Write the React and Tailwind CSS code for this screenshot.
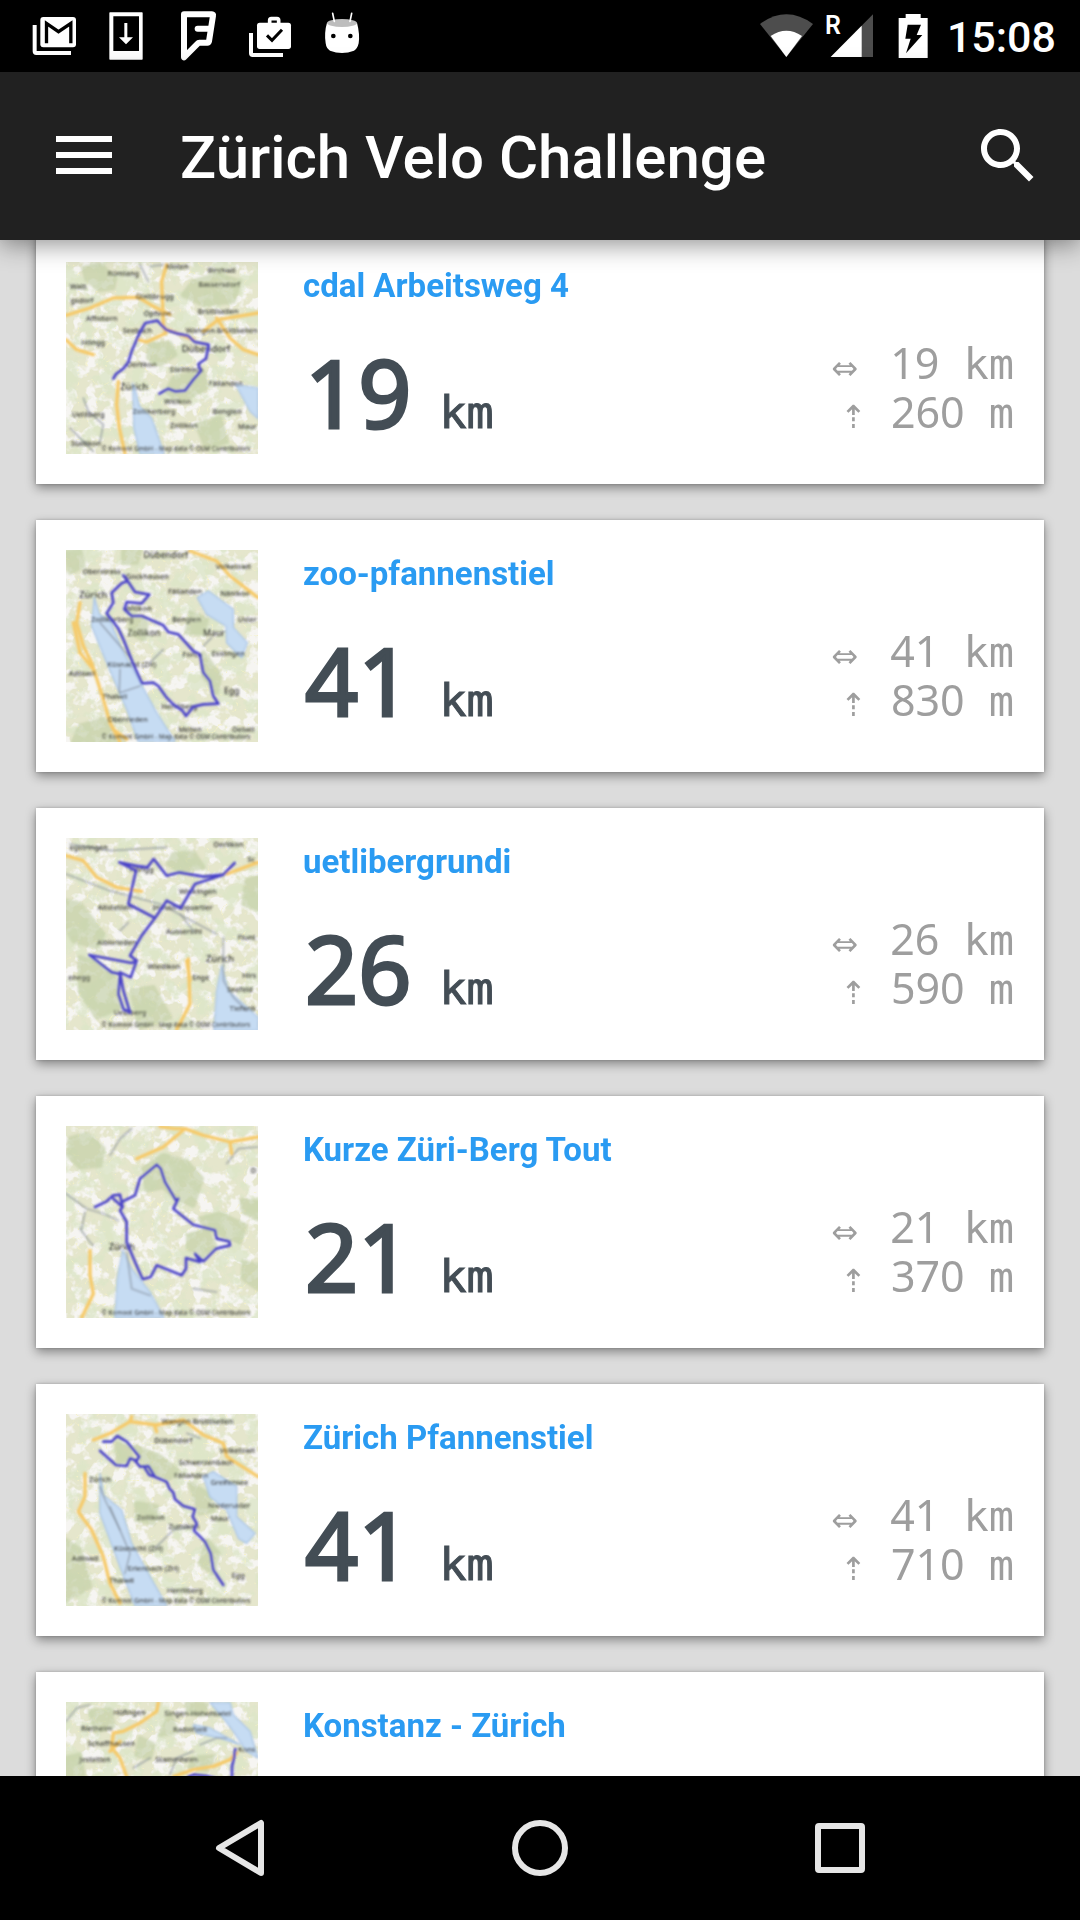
const LAKE = "#c6dcf3";

const routes = [
  {
    name: "cdal Arbeitsweg 4",
    km: 19,
    climb: 260,
    map: {
      seed: 3,
      woods: ["70,40 120,30 165,70 160,100 120,105 80,75", "400,80 470,60 540,80 520,140 430,150 370,120", "270,270 330,265 345,300 300,330 265,310", "340,370 430,350 440,400 360,440 320,410", "410,510 480,490 500,560 440,580"],
      lakes: ["218,385 230,420 238,455 275,490 312,597 240,597 222,520", "528,390 594,400 594,492 570,470"],
      roads: ["18,182 90,160 160,130 235,128 280,155 330,180", "320,30 305,80 308,150 310,210 318,235 260,262 235,255", "310,220 350,235 400,255", "18,255 50,285 100,300", "430,230 475,195 594,175", "470,190 510,250 550,285 594,300", "175,380 170,450 178,520 195,597"],
      tracks: ["240,30 265,80", "70,430 85,470 130,510 120,560", "30,520 70,560 100,590", "270,35 310,30"],
      labels: [[352, 36, "Kloten"], [190, 57, "Rümlang"], [485, 47, "Birchwil"], [477, 91, "Bassersdorf"], [55, 95, "Watt"], [66, 138, "gsdorf"], [284, 127, "Glattbrugg"], [293, 176, "Opfikon"], [474, 170, "Brüttisellen"], [125, 192, "Affoltern"], [485, 228, "Wangen-Brüttisellen"], [232, 228, "Seebach"], [100, 264, "Höngg"], [438, 284, "Dübendorf", 28], [245, 330, "Oerlikon"], [380, 345, "Stettbach"], [222, 400, "Zürich", 28], [497, 388, "Fällanden"], [353, 440, "Witikon"], [282, 472, "Zollikerberg"], [502, 472, "Benglen"], [85, 480, "Uetliberg"], [372, 514, "Zollikon"], [562, 516, "Maur"], [78, 566, "Stallikon"]],
      route: "160,372 168,358 190,342 205,322 215,290 240,232 256,205 292,198 318,225 350,236 384,244 405,262 446,270 438,312 415,328 422,350 400,375 375,408 345,410 325,402 298,417",
    },
  },
  {
    name: "zoo-pfannenstiel",
    km: 41,
    climb: 830,
    map: {
      seed: 8,
      woods: ["18,30 60,25 70,70 30,90", "215,215 260,240 250,290 210,270", "390,210 440,230 430,270 380,270", "430,330 480,400 470,450 430,400", "60,550 130,530 190,597 40,597", "190,25 240,25 230,60 190,60"],
      lakes: ["103,165 118,215 150,235 190,330 230,400 290,510 345,597 235,597 200,500 140,360 95,250", "412,165 445,145 520,200 520,255 562,300 545,345 500,300 498,250 440,215"],
      roads: ["60,180 50,240 70,310 95,360 130,470 150,540 180,597", "40,240 60,330 100,380", "390,25 470,55 510,100 594,165", "160,560 200,590"],
      tracks: ["270,360 310,320", "180,380 178,450", "120,240 215,350", "180,450 240,430", "430,310 455,285"],
      labels: [[318, 40, "Dübendorf", 26], [520, 73, "Volketswil"], [125, 88, "Oberstrass"], [262, 102, "Gockhausen"], [375, 147, "Fällanden"], [525, 153, "Nänikon"], [100, 158, "Zürich", 28], [235, 197, "Witikon"], [157, 230, "Zollikerberg"], [380, 231, "Benglen"], [562, 232, "Uster"], [252, 273, "Zollikon", 26], [462, 273, "Maur", 26], [505, 333, "Esslingen"], [397, 335, "Forch"], [215, 367, "Küsnacht (ZH)"], [66, 392, "Adliswil"], [515, 446, "Egg", 26], [165, 462, "Thalwil"], [358, 491, "Herrliberg"], [203, 530, "Oberrieden"], [390, 562, "Meilen"], [550, 560, "Oetwil"]],
      route: "190,98 203,115 225,148 268,156 245,182 200,178 193,200 215,220 245,220 310,248 325,268 355,275 400,325 420,335 430,390 450,415 460,460 475,483 430,485 400,492 378,520 368,505 340,485 320,465 295,430 280,420 246,422 220,365 190,290 175,258 140,212 160,180 155,150 185,122 203,115 190,98",
    },
  },
  {
    name: "uetlibergrundi",
    km: 26,
    climb: 590,
    map: {
      seed: 14,
      woods: ["18,210 60,220 130,310 110,350 40,330 18,290", "340,70 400,65 430,110 360,120 325,100", "560,150 594,140 594,235 550,220", "60,380 120,400 170,450 180,530 110,560 60,480", "215,480 280,470 330,560 240,590"],
      lakes: ["485,405 505,480 594,560 594,600 462,600 470,480"],
      roads: ["18,75 70,90 110,140 170,170 245,182", "385,385 390,520 350,597", "500,130 594,95", "380,390 390,450"],
      tracks: ["18,130 150,180 300,220 470,310", "30,40 150,60 320,50", "180,300 205,275", "490,320 490,450 520,500 560,540", "360,250 400,300"],
      labels: [[86, 50, "egstringen"], [505, 43, "Oerlikon"], [574, 88, "Sc"], [245, 117, "Höngg"], [413, 182, "Wipkingen"], [165, 231, "Altstetten"], [368, 230, "Industriequartier"], [372, 303, "Aussersihl"], [170, 337, "Albisrieden"], [560, 320, "Flunt"], [480, 386, "Zürich", 28], [312, 407, "Wiedikon"], [422, 441, "Enge"], [58, 441, "enegg"], [568, 436, "Hirs"], [540, 478, "Seefeld"], [548, 533, "Tiefenb"], [210, 547, "Uetliberg"]],
      route: "178,95 225,105 262,110 281,85 320,135 358,125 430,138 490,132 524,97 490,132 405,160 362,232 320,210 300,240 285,262 205,220 228,120 178,95 228,120 M285,262 245,315 210,375 230,390 212,440 180,425 M88,373 215,397 230,390 M88,373 155,425 180,430 175,490 190,535 210,545 190,480 180,425",
    },
  },
  {
    name: "Kurze Züri-Berg Tout",
    km: 21,
    climb: 370,
    map: {
      seed: 21,
      woods: ["30,60 80,45 130,90 120,140 60,145 25,110", "250,150 310,110 380,130 425,180 400,260 350,240 310,205 260,215", "420,300 480,285 555,320 540,370 480,345 440,330", "385,350 440,335 465,380 430,410 385,390", "545,245 594,250 594,300 550,280", "550,430 594,440 594,510 550,480"],
      lakes: ["188,395 215,450 270,520 312,597 165,597 172,480"],
      roads: ["230,120 310,85 375,30 430,50 510,70 594,55", "375,30 345,30 300,24", "510,70 515,105", "90,395 90,470 100,525 65,597"],
      tracks: ["18,225 80,270 130,285 175,305", "150,110 180,60 215,30", "60,330 90,370 100,380", "75,280 65,330", "500,135 535,90 594,85", "200,400 215,510 270,530", "400,510 470,520"],
      labels: [[186, 388, "Zürich", 26], [580, 155, "D"]],
      route: "105,265 140,248 160,230 180,228 188,265 160,240 M188,265 180,275 200,310 200,370 225,430 248,482 272,475 290,440 365,470 378,450 378,418 420,430 405,405 430,428 468,390 510,380 508,368 470,360 465,335 400,318 340,270 355,240 348,245 315,190 302,150 290,138 240,180 225,230 185,250",
    },
  },
  {
    name: "Zürich Pfannenstiel",
    km: 41,
    climb: 710,
    map: {
      seed: 31,
      woods: ["170,110 205,120 215,155 175,165", "225,120 300,150 350,190 330,215 260,190", "390,230 440,260 460,310 420,320", "440,400 475,440 460,500 420,470", "18,400 60,430 90,540 18,580", "230,290 290,300 280,350 230,340"],
      lakes: ["120,200 130,265 185,310 215,410 270,510 320,597 225,597 180,480 120,320", "430,210 460,195 530,240 530,330 585,380 560,410 535,395 500,310 450,270"],
      roads: ["215,30 210,45 150,80 100,100", "210,45 290,55 370,40 430,85 490,110 500,150 594,210", "75,200 75,270 55,315 95,370 130,450 150,530 180,590", "285,60 290,75"],
      tracks: ["290,420 340,370 400,360", "120,240 135,280 180,370", "150,300 210,440 195,500", "380,80 420,95"],
      labels: [[412, 46, "Wangen-Brüttisellen"], [340, 101, "Dübendorf"], [532, 132, "Volketswil"], [438, 167, "Schwerzenbach"], [393, 207, "Fällanden"], [508, 228, "Greifensee"], [120, 219, "Zürich"], [507, 298, "Niederuster"], [272, 332, "Zollikon"], [480, 337, "Maur"], [372, 359, "Zumikon"], [235, 427, "Küsnacht (ZH)"], [75, 455, "Adliswil"], [280, 485, "Erlenbach (ZH)"], [185, 522, "Thalwil"], [535, 507, "Egg"], [375, 551, "Herrliberg"]],
      route: "130,105 155,105 172,88 200,105 238,150 230,162 210,155 200,178 168,175 120,132 M225,162 240,180 265,178 285,210 268,205 255,185 M285,210 320,225 328,245 340,258 345,278 370,298 405,308 398,330 410,350 402,372 435,405 452,440 460,490 490,535",
    },
  },
  {
    name: "Konstanz - Zürich",
    km: 72,
    climb: 620,
    map: {
      seed: 44,
      woods: ["90,50 150,45 160,95 110,110", "380,25 440,30 430,60 385,55", "330,60 350,110 300,120", "18,190 60,180 70,246 18,246", "400,190 460,185 440,225 390,220", "240,130 280,150 270,190 230,180"],
      lakes: ["450,24 510,24 520,60 570,110 594,190 560,170 520,110 490,70", "400,90 450,100 540,150 480,130 410,115"],
      roads: ["295,24 290,50 240,85 190,110 160,115 155,160 180,190 200,246", "340,246 400,225 460,215 510,195 530,175", "180,140 150,170"],
      tracks: ["18,80 50,40 90,30", "400,170 350,190 330,240", "420,150 470,130 500,130", "270,190 220,220"],
      labels: [[208, 53, "Hüfingen"], [413, 56, "Singen-Hohentwiel"], [110, 101, "Rietheim"], [390, 105, "Radolfzell"], [154, 146, "Schaffhausen"], [105, 195, "Jestetten"], [350, 195, "Stammheim"], [560, 166, "Kons"]],
      route: "526,163 522,190 516,215 516,260 M470,252 440,244 400,240 385,246",
    },
  },
];

function RouteMap({ id, name, map }) {
  const field = "field" + id;
  const wood = "wood" + id;
  const lane = "lane" + id;
  const soft = "soft" + id;
  return (
    <svg className="size-48 shrink-0" viewBox="18 22 576 576" role="img" aria-label={"Map of " + name}>
      <defs>
        <filter id={wood} x="0" y="0" width="100%" height="100%">
          <feTurbulence type="fractalNoise" baseFrequency="0.018" numOctaves="4" seed={map.seed} />
          <feColorMatrix values="0 0 0 0 0.72  0 0 0 0 0.79  0 0 0 0 0.58  6 0 0 0 -2.9" />
        </filter>
        <filter id={lane} x="0" y="0" width="100%" height="100%">
          <feTurbulence type="turbulence" baseFrequency="0.018" numOctaves="3" seed={map.seed + 50} />
          <feColorMatrix values="0 0 0 0 0.92  0 0 0 0 0.89  0 0 0 0 0.56  0 -14 0 0 1.2" />
        </filter>
        <filter id={field} x="0" y="0" width="100%" height="100%">
          <feTurbulence type="fractalNoise" baseFrequency="0.025" numOctaves="3" seed={map.seed + 90} />
          <feColorMatrix values="0 0 0 0 0.94  0 0 0 0 0.93  0 0 0 0 0.93  0 0 7 0 -3.2" />
        </filter>
        <filter id={soft}>
          <feGaussianBlur stdDeviation="3" />
        </filter>
      </defs>
      <rect x="18" y="22" width="576" height="576" fill="#e5e6cc" />
      <rect x="18" y="22" width="576" height="576" filter={`url(#${field})`} opacity="0.9" />
      <rect x="18" y="22" width="576" height="576" filter={`url(#${wood})`} opacity="0.8" />
      <rect x="18" y="22" width="576" height="576" filter={`url(#${lane})`} opacity="0.8" />
      <g filter={`url(#${soft})`} fill="none" strokeLinejoin="round" strokeLinecap="round">
        {map.woods.map((p) => (
          <polygon key={p} points={p} fill="#c0cda2" stroke="#c0cda2" strokeWidth="14" opacity="0.6" />
        ))}
        {map.lakes.map((p) => (
          <polygon key={p} points={p} fill={LAKE} stroke="#aac5e8" strokeWidth="4" />
        ))}
        {map.tracks.map((p) => (
          <polyline key={p} points={p} stroke="#7d8592" strokeWidth="5" opacity="0.6" />
        ))}
        {map.roads.map((p) => (
          <polyline key={p} points={p} stroke="#f6c968" strokeWidth="10" />
        ))}
        <g fill="#2f2f2d" fontFamily="'Noto Sans', sans-serif" fontWeight="500" textAnchor="middle">
          {map.labels.map(([x, y, text, size]) => (
            <text key={text} x={x} y={y + 7} fontSize={size || 22}>
              {text}
            </text>
          ))}
          <text x="348" y="590" fontSize="19">
            © Komoot GmbH - Map data © OSM Contributors
          </text>
        </g>
        <path d={"M" + map.route} stroke="#4a42c8" strokeWidth="8" />
      </g>
    </svg>
  );
}

function StatusIcons() {
  return (
    <div className="flex">
      <svg className="size-[72px]" viewBox="54 0 216 216" aria-label="Gmail">
        <path d="M104 75v79q0 5 5 5h104" fill="none" stroke="#fff" strokeWidth="12" />
        <rect x="121" y="51" width="107" height="91" rx="9" fill="#fff" />
        <path d="M139.500 130V70l36 25 37-25v60" fill="none" stroke="#000" strokeWidth="10" />
      </svg>
      <svg className="size-[72px]" viewBox="270 0 216 216" aria-label="System update">
        <path fillRule="evenodd" d="M330 37h96q2 0 2 2v138q0 2-2 2h-96q-2 0-2-2V39q0-2 2-2zM340 49v104h77V49z" fill="#fff" />
        <path d="M373 69h9v43h17l-21 21-21-21h16z" fill="#fff" />
      </svg>
      <svg className="size-[72px]" viewBox="486 0 216 216" aria-label="Foursquare">
        <path d="M552 43h84q4 0 3 4l-12 77q-1 4-5 4h-24q-3 0-5 3l-41 41z" fill="none" stroke="#fff" strokeWidth="18" strokeLinejoin="round" />
        <path d="M593 86h35" fill="none" stroke="#fff" strokeWidth="18" strokeLinecap="round" />
      </svg>
      <svg className="size-[72px]" viewBox="702 0 216 216" aria-label="Play Store">
        <path d="M753 99v61q0 5 5 5h91" fill="none" stroke="#fff" strokeWidth="12" />
        <path d="M809 70V61q0-5 5-5h17q5 0 5 5v9" fill="none" stroke="#fff" strokeWidth="11" />
        <rect x="771" y="68" width="102" height="79" rx="8" fill="#fff" />
        <path d="M801 106l15 15 30-32" fill="none" stroke="#000" strokeWidth="9" />
      </svg>
      <svg className="size-[72px]" viewBox="918 0 216 216" aria-label="Android">
        <path d="M981 68q45 20 90 0 9 34 5 62-4 17-14 22-36 14-72 0-11-6-13-22-5-32 4-62z" fill="#fff" />
        <ellipse cx="1026" cy="69" rx="45" ry="12" fill="#bdbdbd" />
        <path d="M998 40l5 24M1055 40l-5 24" stroke="#fff" strokeWidth="5" strokeLinecap="round" />
        <circle cx="1000" cy="108" r="7" />
        <circle cx="1051" cy="108" r="7" />
      </svg>
    </div>
  );
}

function StatusBar() {
  return (
    <div className="flex h-[72px] shrink-0 items-center justify-between bg-black pr-6 pl-[18px] text-white">
      <StatusIcons />
      <div className="flex items-center">
        <svg className="h-[72px] w-14" viewBox="60 0 168 216" aria-label="Wi-Fi">
          <path d="M142 171L63 72q79-58 159 0z" fill="#4d4d4d" />
          <path d="M142 171L95 108q47-31 94 0z" fill="#fff" />
        </svg>
        <svg className="ml-2 h-[72px] w-[52px]" viewBox="252 0 156 216" aria-label="Mobile signal, roaming">
          <path d="M402 43v128H275z" fill="#4d4d4d" />
          <path d="M368 77v94h-93z" fill="#fff" />
          <text x="258" y="101" fontSize="75" fontWeight="600" fontFamily="'Roboto', sans-serif" fill="#fff">
            R
          </text>
        </svg>
        <svg className="ml-[22px] h-[72px] w-8" viewBox="472 0 96 216" aria-label="Battery charging">
          <path d="M498 42h45v12h21v120h-87V54h21z" fill="#fff" />
          <path d="M504 74h40l-13 31h17l-49 55 14-44h-16z" fill="#000" />
        </svg>
        <span className="ml-[18px] pt-0.5 font-[Roboto,sans-serif] text-[43px] leading-none font-medium">15:08</span>
      </div>
    </div>
  );
}

function AppBar() {
  return (
    <header className="relative z-10 flex h-[168px] shrink-0 items-center bg-[#212121] pr-9 pl-12 text-white shadow-[0_4px_24px_rgba(0,0,0,0.45)]">
      <button type="button" aria-label="Menu" className="size-[72px]">
        <svg viewBox="0 0 72 72" fill="#fff">
          <path d="M8 16h56v6H8zM8 32h56v6H8zM8 48h56v6H8z" />
        </svg>
      </button>
      <h1 className="ml-[60px] flex-1 pt-1 text-[60px] leading-none font-medium">Zürich Velo Challenge</h1>
      <button type="button" aria-label="Search" className="size-[72px]">
        <svg viewBox="0 0 24 24" fill="#fff">
          <path d="M15.500 14h-.79l-.28-.27C15.410 12.590 16 11.110 16 9.500 16 5.910 13.090 3 9.500 3S3 5.910 3 9.500 5.910 16 9.500 16c1.610 0 3.090-.59 4.230-1.570l.27.28v.79l5 4.990L20.490 19l-4.990-5zm-6 0C7.010 14 5 11.990 5 9.500S7.010 5 9.500 5 14 7.010 14 9.500 11.990 14 9.500 14z" />
        </svg>
      </button>
    </header>
  );
}

function Stat({ arrow, value, unit }) {
  return (
    <div className="flex h-[49px] items-baseline justify-end">
      {arrow}
      <span className="font-['Noto_Sans',sans-serif] text-[43px] leading-[49px]">{value}</span>
      <span className="ml-6 font-['DejaVu_Sans_Mono',monospace] text-[42px] leading-[49px]">{unit}</span>
    </div>
  );
}

function RouteCard({ id, route }) {
  return (
    <li className="flex bg-white p-[30px] shadow-[0_4px_10px_rgba(0,0,0,0.4),0_0_3px_rgba(0,0,0,0.2)]">
      <RouteMap id={id} name={route.name} map={route.map} />
      <div className="ml-[45px] flex h-48 flex-1 flex-col justify-between">
        <h2 className="self-start text-[33px] leading-[48px] font-bold text-[#2a9bf2]">
          <a href={"#route-" + id}>{route.name}</a>
        </h2>
        <div className="flex items-end justify-between">
          <p className="mb-3 ml-0.5 flex items-baseline text-[#434d55]">
            <span className="font-['Noto_Sans',sans-serif] text-[93px] leading-[100px] [-webkit-text-stroke:3px]">{route.km}</span>
            <span className="ml-7 font-['DejaVu_Sans_Mono',monospace] text-[45px] leading-none [-webkit-text-stroke:1px]">km</span>
          </p>
          <div className="mb-[18px] text-[#9e9e9e]">
            <Stat
              value={route.km}
              unit="km"
              arrow={<span className="mr-8 font-['DejaVu_Sans',sans-serif] text-[32px] leading-none">⇔</span>}
            />
            <Stat
              value={route.climb}
              unit="m"
              arrow={<span className="mr-6 font-['DejaVu_Sans',sans-serif] text-[32px] leading-none">⇡</span>}
            />
          </div>
        </div>
      </div>
    </li>
  );
}

function NavBar() {
  return (
    <nav className="relative z-10 flex h-36 shrink-0 bg-black px-[90px]">
      <button type="button" aria-label="Back" className="flex flex-1 items-center justify-center">
        <svg className="size-16" viewBox="0 0 64 64" fill="none" stroke="#e6e6e6" strokeWidth="6" strokeLinejoin="round">
          <path d="M53 7v50L11 32z" />
        </svg>
      </button>
      <button type="button" aria-label="Home" className="flex flex-1 items-center justify-center">
        <svg className="size-16" viewBox="0 0 64 64" fill="none" stroke="#e6e6e6" strokeWidth="6">
          <circle cx="32" cy="32" r="25" />
        </svg>
      </button>
      <button type="button" aria-label="Overview" className="flex flex-1 items-center justify-center">
        <svg className="size-16" viewBox="0 0 64 64" fill="none" stroke="#e6e6e6" strokeWidth="6">
          <rect x="10" y="10" width="44" height="44" rx="1" strokeLinejoin="round" />
        </svg>
      </button>
    </nav>
  );
}

export default function App() {
  return (
    <div className="flex h-screen flex-col overflow-hidden bg-[#dcdcdc] font-[Roboto,sans-serif]">
      <StatusBar />
      <AppBar />
      <main className="min-h-0 flex-1 overflow-hidden px-9">
        <ul className="-mt-2 flex flex-col gap-9">
          {routes.map((route, i) => (
            <RouteCard key={route.name} id={i} route={route} />
          ))}
        </ul>
      </main>
      <NavBar />
    </div>
  );
}
